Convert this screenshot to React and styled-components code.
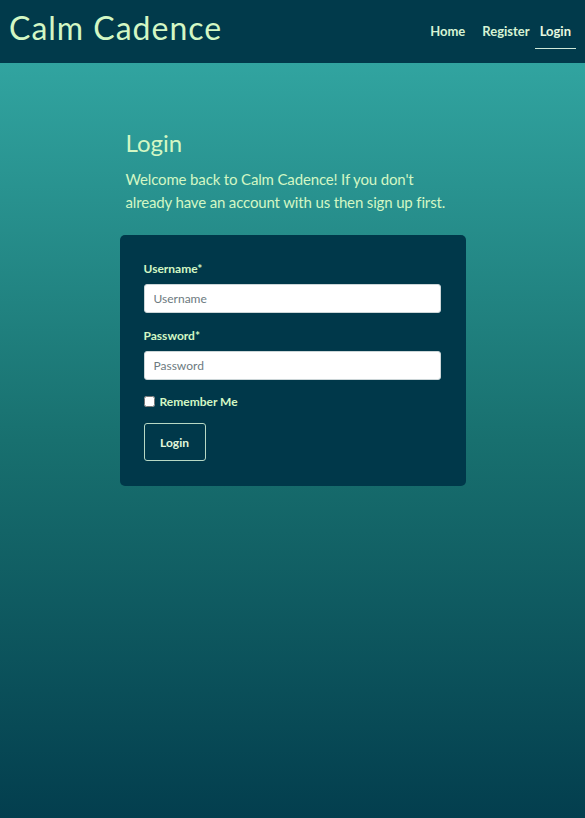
import styled, { createGlobalStyle } from "styled-components";

const GlobalStyle = createGlobalStyle`
  html, body {
    margin: 0;
    padding: 0;
  }
  body {
    font-family: Lato, "Liberation Sans", sans-serif;
  }
  * {
    box-sizing: border-box;
  }
`;

const Page = styled.div`
  min-height: 818px;
  display: flex;
  flex-direction: column;
  background: #023a4b;
`;

const Header = styled.header`
  height: 63px;
  display: flex;
  justify-content: space-between;
  align-items: center;
  padding: 0 9px 0 9px;
  background-color: #013a4b;
`;

const Brand = styled.h1`
  margin: 0;
  margin-top: -8px;
  font-family: Lato, "Open Sans", sans-serif;
  font-weight: 400;
  font-size: 32px;
  letter-spacing: 1px;
  color: #d3f7c4;
`;

const Nav = styled.nav`
  display: flex;
  align-items: center;
`;

const NavLink = styled.a`
  font-size: 13px;
  font-weight: 700;
  color: ${(props) => (props.active ? "#e8f9e0" : "#d6f3d4")};
  text-decoration: none;
  padding: 8px 5px 9px;
  margin-left: ${(props) => (props.gap ? props.gap : "0")};
  border-bottom: 1px solid ${(props) => (props.active ? "#cfe8d8" : "transparent")};
`;

const Main = styled.main`
  flex: 1;
  background: linear-gradient(180deg, #31a4a0 0%, #18706f 50%, #033e4e 100%);
  display: flex;
  justify-content: center;
  padding-top: 65px;
`;

const Column = styled.section`
  width: 346px;
`;

const Intro = styled.div`
  padding: 0 6px;
  > h2 {
    margin: 0 0 11px;
    font-family: Lato, "Open Sans", sans-serif;
    font-weight: 400;
    font-size: 24px;
    color: #d3f7c4;
  }
  > p {
    max-width: 325px;
    margin: 0 0 21px;
    font-size: 15px;
    letter-spacing: -0.15px;
    line-height: 23px;
    color: #d3f7c4;
  }
`;

const Card = styled.form`
  background-color: #00384a;
  border-radius: 5px;
  padding: 26px 24px 25px;
  display: flex;
  flex-direction: column;
`;

const Label = styled.label`
  font-size: 12px;
  font-weight: 700;
  color: #d3f7c4;
  margin-bottom: 8px;
`;

const Input = styled.input`
  width: 297px;
  height: 29px;
  border: 1px solid #ccd6d8;
  border-radius: 3px;
  padding: 0 9px;
  font-family: Lato, "Liberation Sans", sans-serif;
  font-size: 12px;
  margin-bottom: 15px;
  &::placeholder {
    color: #6d7a7f;
  }
`;

const CheckRow = styled.label`
  display: flex;
  align-items: center;
  gap: 5px;
  font-size: 12px;
  font-weight: 700;
  color: #d3f7c4;
  margin-top: -1px;
  margin-bottom: 14px;
  > input {
    margin: 0;
    width: 11px;
    height: 11px;
  }
`;

const Button = styled.button`
  align-self: flex-start;
  width: 62px;
  height: 38px;
  background: transparent;
  border: 1px solid #b7d8c4;
  border-radius: 3px;
  color: #e3f7dc;
  font-family: Lato, "Liberation Sans", sans-serif;
  font-size: 12px;
  font-weight: 700;
`;

export default function App() {
  return (
    <Page>
      <GlobalStyle />
      <Header>
        <Brand>Calm Cadence</Brand>
        <Nav>
          <NavLink href="#">Home</NavLink>
          <NavLink href="#" gap="7px">Register</NavLink>
          <NavLink href="#" active>Login</NavLink>
        </Nav>
      </Header>
      <Main>
        <Column>
          <Intro>
            <h2>Login</h2>
            <p>
              Welcome back to Calm Cadence! If you don't already have an
              account with us then sign up first.
            </p>
          </Intro>
          <Card onSubmit={(e) => e.preventDefault()}>
            <Label htmlFor="username">Username*</Label>
            <Input id="username" placeholder="Username" />
            <Label htmlFor="password">Password*</Label>
            <Input id="password" type="password" placeholder="Password" />
            <CheckRow>
              <input type="checkbox" />
              Remember Me
            </CheckRow>
            <Button type="submit">Login</Button>
          </Card>
        </Column>
      </Main>
    </Page>
  );
}
